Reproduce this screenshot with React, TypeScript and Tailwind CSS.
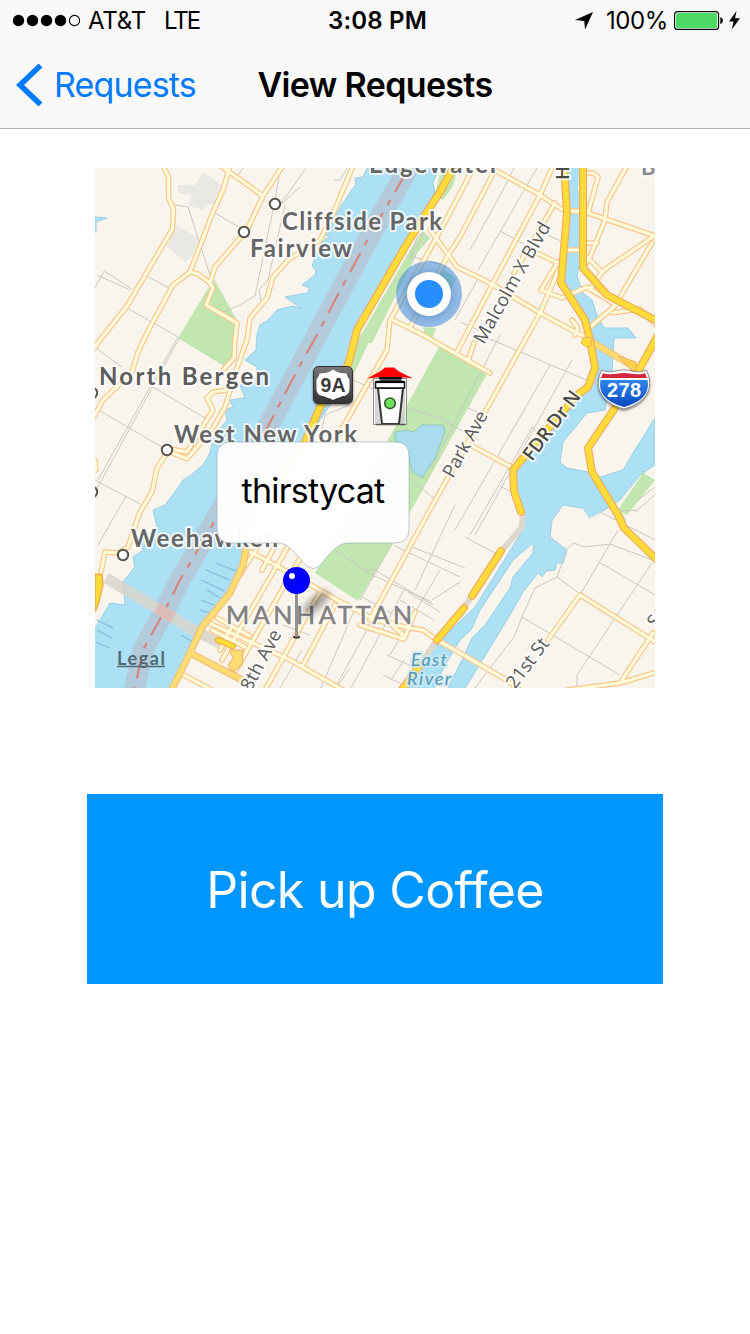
import React from "react";

const land = "#f9f5ed";
const water = "#ace0f4";
const park = "#c1e6b0";

const minorRoads: string[] = [
  "M163 166L168.5 177V198L173.5 209L172.5 229L166 240L127 306L100 340L93 350",
  "M230 166L223 190L213 212L190 272L173 285L147 333L138 352L132 372L103 400L93 418",
  "M221 166L263 196",
  "M284 164L263 196L247 230L215 267L210 283L213 288L206 305L237 323L235 340L234 358L224 369",
  "M190 272L198 274L210 283",
  "M353 166L333 214L320 240L288 260L273 277L267 298L250 318L247 340L237 368L225 407L213 428L187 459L170 452",
  "M227 390L213 392L207 398L213 410L187 452L170 449",
  "M167 453L157 468L152 492L140 512L128 547L118 553L105 552L101 572",
  "M95 460L96 470",
  "M475 165L437 237L390 320L387 350L340 432L300 500L262 570",
  "M495 170L460 237L447 257L410 327",
  "M430 230L457 267L480 278L497 287L540 313L577 333L588 338",
  "M495 170L540 195L563 210L588 213L655 236",
  "M553 166L540 195L492 285L457 352",
  "M555 203L514 273",
  "M537 253L560 264",
  "M558 262L541 290L562 298L587 287L616 305L590 327",
  "M561 264L540 313L485 412L427 515L370 620",
  "M393 320L423 335L490 373",
  "M474 343L468 361",
  "M467 443L513 468",
  "M567 211H583",
  "M566 250H582",
  "M657 234L607 268L602 272L587 257",
  "M652 243L620 297",
  "M627 166L607 202L605 220L590 257L583 268",
  "M583 173H593L598 177L588 213",
  "M588 243H597M602 272L590 290M572 320L578 328L575 335",
  "M612 313L640 309L655 324",
  "M337 600L375 620L410 628L423 630L437 640L460 653L503 678L520 690",
  "M375 609L405 637L415 612M360 625L404 639",
  "M548 640L580 595L657 643",
  "M653 633L620 683M567 690L620 683L657 672",
  "M247 550L290 573L337 600",
  "M207 622L290 660L345 691",
  "M180 673L210 689",
  "M290 543L222 660",
  "M302 555L236 670",
  "M320 592L265 690",
  "M335 605L302 667",
  "M217 618L250 636M212 630L245 647M232 626L220 650",
  "M262 540L240 575",
];

const lanes: string[] = [
  "M243 168L236 178M175 205L188 207L210 275M215 213L247 232M280 170L275 200L255 296L240 305L223 312",
  "M300 187L275 210M285 205L268 280L259 290L261 300",
  "M147 276L169 288M127 308L178 337L98 480M97 275L130 290M95 288L104 271L132 289",
  "M97 349L122 367M153 387L205 418M95 408L167 450M95 480L140 504M126 496L98 545M180 337L95 492",
  "M334 180H340L352 160M280 205L306 168M409 260L418 235L424 233L411 258",
  "M514 168L503 190L470 250M537 168L478 270M500 231L562 265M543 233L561 241",
  "M480 275L455 320M460 322L485 333M410 256L440 264M478 334L605 388M500 335L430 470M550 365L455 530M533 426L470 535M532 428L545 438",
  "M322 428L325 415L350 405M353 380L375 390M407 408L440 418L478 440M413 482L436 500M468 408L482 414",
  "M572 360L500 490L475 535M500 486L511 492M465 537L495 553M455 505L415 590",
  "M407 545L465 568M395 546L460 577M335 550L370 574L432 602M392 544L360 600M362 570H375L433 605",
  "M362 597L440 640M356 606L320 690M375 615L334 690M405 588L350 690M387 655L420 670M383 675L410 688",
  "M400 600L434 620M408 592L440 612M404 660L391 680M440 570L390 655M432 600L460 582",
  "M566 550L574 543L584 547L610 544L655 561M557 577L567 550M557 577L580 594M557 577L535 588L522 617L514 637L475 688M522 617L620 675",
  "M610 544L577 600M599 562L655 595M652 563L577 675V688M600 512L655 540M612 512L637 510M610 544L618 530",
  "M638 500L655 487M635 512L655 495M302 650L280 688M283 625L310 635M335 690L350 668",
];

const highways: string[] = [
  "M455 165L440 192L425 215L405 247L357 330L348 365L320 407L305 442L262 500",
  "M564 166L567 213L561 283L585 320L590 340L595 368L588 387L577 395L513 470L514 491L521 512",
  "M583 166V268L607 295L657 321",
  "M657 337L640 368L617 405L588 448L592 472L618 515L624 528L657 560",
  "M501 551L472 596",
  "M464 608L437 640",
  "M420 665L401 691",
];

const amber: string[] = [
  "M246 548L243 565L230 593L202 627L190 653L171 691",
  "M190 653L217 667L244 681",
];

const townDots: [number, number][] = [
  [275, 204],
  [244, 232],
  [167, 450],
  [123, 555],
  [92, 393],
  [92, 492],
];

function Lines({ items, color, width, cap = "round" }: { items: string[]; color: string; width: number; cap?: "round" | "butt" }) {
  return (
    <g fill="none" stroke={color} strokeWidth={width} strokeLinejoin="round" strokeLinecap={cap}>
      {items.map((d) => (
        <path key={d} d={d} />
      ))}
    </g>
  );
}

function Label({
  x,
  y,
  w,
  size,
  children,
  color = "#666666",
  angle = 0,
  weight = 700,
  family = "Lato, sans-serif",
  italic = false,
  halo = "#ffffff",
}: {
  x: number;
  y: number;
  w: number;
  size: number;
  children: string;
  color?: string;
  angle?: number;
  weight?: number;
  family?: string;
  italic?: boolean;
  halo?: string;
}) {
  return (
    <text
      x={x}
      y={y}
      textLength={w}
      fontSize={size}
      fontWeight={weight}
      fontFamily={family}
      fontStyle={italic ? "italic" : "normal"}
      fill={color}
      stroke={halo}
      strokeOpacity={0.8}
      strokeWidth={4}
      strokeLinejoin="round"
      paintOrder="stroke"
      transform={`rotate(${angle} ${x} ${y})`}
    >
      {children}
    </text>
  );
}

function CityMap() {
  const road = "'Open Sans', 'Noto Sans', sans-serif";
  return (
    <svg className="block h-full w-full [font-variant-ligatures:none]" viewBox="95 168 560 520">
      <defs>
        <linearGradient id="plate" x1="0" y1="0" x2="0" y2="1">
          <stop offset="0" stopColor="#777" />
          <stop offset="1" stopColor="#333" />
        </linearGradient>
        <linearGradient id="interstate" x1="0" y1="0" x2="0" y2="1">
          <stop offset="0" stopColor="#2f86f2" />
          <stop offset="1" stopColor="#0a47bd" />
        </linearGradient>
        <filter id="soft" x="-50%" y="-50%" width="200%" height="200%">
          <feGaussianBlur stdDeviation="3.5" />
        </filter>
        <filter id="drop" x="-30%" y="-30%" width="160%" height="160%">
          <feDropShadow dx="0" dy="1.5" stdDeviation="1.2" floodOpacity="0.5" />
        </filter>
      </defs>
      <rect x="95" y="168" width="560" height="520" fill={land} />

      <path d="M203 172L222 185L215 203L206 205L203 210L188 205L192 195L178 193V185H195ZM177 225L198 238L193 255L185 262L167 247Z" fill="#e9e8e5" />

      <g fill={water} stroke="#9bcfe6" strokeWidth="1">
        <path d="M368 166L363 177L355 178L356 184L345 200L323 235L331 236L321 242L312 266L316 270L315 275L302 285L310 288L307 293L285 297L301 308L292 306L277 310L268 320L260 325L257 335L256 350L245 360L257 367L255 382L240 385L245 398L230 400L233 407L225 410L227 420L213 438L210 453L203 465L190 476L183 480L180 485L165 505L153 510L157 527L142 540L143 550L133 557L135 567L123 582L125 605L110 603L97 625L93 630V692H172L190 653L202 627L230 593L243 560L262 500L305 442L330 405L357 330L405 247L418 225L435 192L433 183L440 166Z" />
        <path d="M568 166H581V258L577 276L583 293L592 300L597 315L604 328H628L636 338L614 338L612 370L605 410L587 413L563 442L560 462L567 468L593 473L597 478L623 470L630 458L655 418V465L640 475L620 500L603 511L590 518L583 508L563 505L552 520L550 537L567 550L563 563H557L555 570L546 571L542 577L538 573L523 592L507 620L464 690H405L423 663L440 640L475 607L523 530L521 510L513 472L577 395L588 387L595 368L588 335L585 320L572 300L564 283L568 213Z" />
        <path d="M95 217L107 218L96 222V232H94Z" />
      </g>
      <path
        d="M533 543L513 560L500 580L480 610L471 630L460 640L445 665L433 690H447L462 660L472 638L485 625L510 588L513 577L533 553Z"
        fill={land}
        stroke="#9bcfe6"
      />
      <path d="M579 178L584 180L582 190H578ZM563 508L583 510L590 520L600 512L570 530L555 525Z" fill={land} />
      <path d="M583 508L590 518L603 511Z" fill={water} />
      <path
        d="M97 620L113 628M97 630L112 638M96 642L110 648M206 570L230 580M201 580L224 591M207 590L220 598M201 600L216 606M200 610L213 614M216 563L236 571M181 635L193 642"
        stroke="#83bdda"
        strokeWidth="1.2"
      />

      <g fill={park}>
        <path d="M210 285L214 279L238 322L234 358L224 366L178 338Z" />
        <path d="M440 345L487 374L393 543L358 601L315 573Z" />
        <path d="M441 168L458 168L453 186L443 200L435 196ZM423 230L430 238L418 252L392 303L372 343L357 342L410 250Z" />
        <path d="M443 269L456 278L450 292L436 292ZM423 327L436 328L432 340L425 337ZM643 473L655 480L627 515L618 510ZM357 335L372 335L355 372H350Z" />
        <path d="M620 510L627 521L622 520Z" />
      </g>
      <path d="M395 432L407 430L413 432L422 425H443L445 432L435 458L422 478L412 472L408 452L395 440Z" fill="#a9dcef" stroke="#93cbb8" />

      <path d="M413 160L373 230L317 335L265 432L217 517L180 580L165 610L143 650L134 692" fill="none" stroke="#b3cadb" strokeWidth="21" />
      <path
        d="M406 173L373 230L335 300L317 335L300 365L265 432L217 517L180 580L165 610L143 650L134 692"
        fill="none"
        stroke="#d98678"
        strokeWidth="2.2"
        strokeDasharray="22 9 6 9"
      />

      <Lines items={lanes} color="#cbc8c1" width={1} cap="butt" />

      <path d="M106 578L197 632L226 646" stroke="#d9d5ca" strokeOpacity="0.85" strokeWidth="11" fill="none" />
      <path d="M157 608L173 618" stroke="#dcbcb8" strokeWidth="11" fill="none" />
      <path d="M523 510L522 527L500 553M472 596L462 610M437 640L420 665" stroke="#dcd8cc" strokeWidth="6" fill="none" />

      <Lines items={minorRoads} color="#f8c78e" width={5.6} />
      <Lines items={minorRoads} color="#fffbd9" width={3.2} />

      <Lines items={["M590 341L638 369", ...amber]} color="#f2bd7c" width={7.2} />
      <Lines items={["M590 341L638 369", ...amber]} color="#fddc72" width={5.2} />
      <Lines items={highways} color="#f2ac62" width={8} />
      <Lines items={highways} color="#ffdc38" width={5.6} />
      <path d="M95 574L102 575L103 585L98 605L95 612Z" fill="#ffdc38" stroke="#f2ac4a" strokeWidth="1.5" />
      <path d="M218 640L233 646" stroke="#f2ac4a" strokeWidth="6.5" strokeLinecap="round" />
      <path d="M218 640L233 646" stroke="#ffdc38" strokeWidth="4.2" strokeLinecap="round" />
      <path d="M229 650H243L242 665L232 672L228 665L233 658Z" fill="#fddc72" stroke="#eeb069" />
      <path d="M583 338L592 337L591 346L586 347L581 343Z" fill="#ffdc38" stroke="#eeb069" />
      <path d="M618 356L636 362L637 369L632 371Z" fill="#fdd24a" stroke="#eeb069" />

      <g fill="#fff" stroke="#55554f" strokeWidth="2">
        {townDots.map(([cx, cy]) => (
          <circle key={`${cx}-${cy}`} cx={cx} cy={cy} r="5.2" />
        ))}
      </g>

      <Label x={369} y={173} w={130} size={24}>Edgewater</Label>
      <Label x={282} y={230} w={160} size={24}>Cliffside Park</Label>
      <Label x={250} y={257} w={102} size={24}>Fairview</Label>
      <Label x={99} y={385} w={170} size={24} color="#5c5c5c">North Bergen</Label>
      <Label x={174} y={443} w={183} size={24}>West New York</Label>
      <Label x={131} y={547} w={147} size={24}>Weehawken</Label>
      <g stroke="#85827f">
        <Label x={226} y={624} w={186} size={25} weight={400} color="#85827f">MANHATTAN</Label>
        <text x="226" y="624" textLength="186" fontSize="25" fontFamily="Lato, sans-serif" fill="none" strokeWidth="0.6" aria-hidden="true">
          MANHATTAN
        </text>
      </g>
      <Label x={641} y={175} w={16} size={22} color="#8a8a8a">B</Label>

      <Label x={484} y={345} w={136} size={18.5} weight={500} family={road} angle={-60.5} color="#5a5a5a">Malcolm X Blvd</Label>
      <Label x={453} y={479} w={73} size={18.5} weight={500} family={road} angle={-61} color="#5a5a5a">Park Ave</Label>
      <Label x={532} y={462} w={82} size={19} weight={600} family={road} angle={-53} color="#4a4a4a">FDR Dr N</Label>
      <Label x={251} y={692} w={66} size={18.5} weight={500} family={road} angle={-62} color="#5a5a5a">8th Ave</Label>
      <Label x={515} y={690} w={58} size={18.5} weight={500} family={road} angle={-53} color="#5a5a5a">21st St</Label>
      <Label x={656} y={629} w={18} size={18.5} weight={500} family={road} angle={-53} color="#5a5a5a">St</Label>
      <Label x={569} y={180} w={14} size={18.5} weight={600} family={road} angle={-90} color="#4a4a4a">H</Label>

      <Label x={411} y={666} w={36} size={18} weight={500} italic color="#5c9cb9" halo="#cdebf5">East</Label>
      <Label x={407} y={685} w={44} size={18} weight={500} italic color="#5c9cb9" halo="#cdebf5">River</Label>

      <text x="117" y="665" textLength="48" fontSize="18" fontWeight="700" fontFamily="Lato, sans-serif" fill="#506a76">
        Legal
      </text>
      <path d="M117 666.5H165" stroke="#506a76" strokeWidth="1.5" />

      <g filter="url(#drop)">
        <rect x="313.5" y="366.5" width="39" height="37" rx="5" fill="url(#plate)" stroke="#333" />
        <path
          d="M333 369.5C337 372.5 342 373.5 346.5 373.5C347 376 348.5 378 349.5 379.5V389C349.5 392 348 394.5 345.5 395.5C341 396.5 337 398 333 400C329 398 325 396.5 320.500 395.5C318 394.5 316.5 392 316.5 389V379.500C317.500 378 319 376 319.500 373.5C324 373.500 329 372.5 333 369.500Z"
          fill="#fff"
        />
      </g>
      <text x="333" y="392" textAnchor="middle" fontSize="19.5" fontWeight="700" fontFamily="'Liberation Sans', sans-serif" fill="#3a3a3a" textLength="25">
        9A
      </text>

      <g filter="url(#drop)">
        <path d="M602 370C609 374 617 370 624 370C631 370 639 374 646 370C654 384 650 402 624 409C598 402 594 384 602 370Z" fill="#fff" stroke="#777" strokeWidth="0.8" />
      </g>
      <path d="M603 373C610 376 617 373 624 373C631 373 638 376 645 373L647 378H601Z" fill="#d3273f" />
      <path d="M600.5 380H647.5C650 393 642 402 624 407C606 402 598 393 600.5 380Z" fill="url(#interstate)" />
      <text x="624" y="397" textAnchor="middle" fontSize="20" fontWeight="700" fontFamily="'Liberation Sans', sans-serif" fill="#fff" textLength="34">
        278
      </text>

      <circle cx="429" cy="294" r="33" fill="#2a7fe0" fillOpacity="0.5" />
      <circle cx="429" cy="295" r="23" fill="#1d4f8c" fillOpacity="0.3" filter="url(#soft)" />
      <circle cx="429" cy="294" r="22" fill="#fff" />
      <circle cx="429" cy="294" r="14" fill="#268eff" />

      <rect x="373.5" y="378.5" width="33" height="46" fill="#fff" fillOpacity="0.6" stroke="#909090" />
      <path d="M375 380H383L380 424H375ZM398 380H405V424H400Z" fill="#aaa" fillOpacity="0.45" />
      <path d="M367 378.5L380 371.5L385 367.5H394L399 371.5L413 378.5L405 377.500H376Z" fill="#f00" />
      <rect x="379.500" y="377" width="22" height="5" fill="#4a4a4a" />
      <path d="M379 378H402" stroke="#000" strokeWidth="1.500" />
      <path d="M378 388L382 424H399L403 388Z" fill="#fff" stroke="#333" strokeWidth="2" />
      <rect x="375.5" y="382" width="29" height="6" fill="#fff" stroke="#1a1a1a" strokeWidth="1.6" />
      <path d="M376 382H404" stroke="#000" strokeWidth="2.2" />
      <path d="M376 424.5H405" stroke="#555" strokeWidth="1.5" />
      <circle cx="390" cy="403.300" r="5.300" fill="#6de35b" stroke="#335c2d" strokeWidth="1.6" />

      <ellipse cx="316" cy="603" rx="17" ry="6" transform="rotate(-43 316 603)" fill="#000" fillOpacity="0.36" filter="url(#soft)" />
      <ellipse cx="296.5" cy="637" rx="3.5" ry="1.6" fill="#333" />
      <path d="M296.5 590V637" stroke="#929292" strokeWidth="3" />
      <circle cx="296.5" cy="580.5" r="13.5" fill="#0000fe" />
      <circle cx="292" cy="576" r="3" fill="#fff" />
    </svg>
  );
}

function Callout() {
  return (
    <div className="absolute left-[121px] top-[273px] h-[130px] w-[194px]">
      <svg className="absolute inset-0" width="194" height="130" viewBox="216 441 194 130">
        <path
          d="M231 442H395Q409 442 409 456V529Q409 543 395 543H348C335 543 326 560 318 567Q313 570 308 567C299 560 291 543 278 543H231Q217 543 217 529V456Q217 442 231 442Z"
          fill="#fff"
          fillOpacity="0.97"
          stroke="#8a9ba3"
          strokeOpacity="0.5"
        />
      </svg>
      <div className="relative flex h-[98px] items-center justify-center text-[34px] tracking-[-0.75px] text-black">thirstycat</div>
    </div>
  );
}

function StatusBar() {
  return (
    <div className="grid h-[42px] grid-cols-[1fr_auto_1fr] items-center text-[24px] leading-none text-black">
      <div className="flex items-center pl-3">
        <svg width="70" height="14" viewBox="0 0 70 14">
          {[6.5, 20.5, 34.5, 48.5].map((cx) => (
            <circle key={cx} cx={cx} cy="6.5" r="5.7" />
          ))}
          <circle cx="62.5" cy="6.5" r="5.1" fill="none" stroke="#000" strokeWidth="1.1" />
        </svg>
        <span className="ml-[6px] tracking-[-0.2px]">AT&amp;T</span>
        <span className="ml-[18px] tracking-[-2px]">LTE</span>
      </div>
      <div className="pl-[5px] font-semibold tracking-[0.2px]">3:08 PM</div>
      <div className="flex items-center justify-end pr-[9px]">
        <svg width="20" height="20" viewBox="0 0 20 20">
          <path d="M19 1L11 18.5L10.3 10L1 9Z" />
        </svg>
        <span className="ml-3 tracking-[-0.4px]">100%</span>
        <svg className="ml-[6px]" width="50" height="20" viewBox="0 0 50 20">
          <rect x="0.6" y="0.6" width="44" height="17.8" rx="3" fill="#fff" stroke="#000" strokeWidth="1.1" />
          <rect x="2" y="2" width="41.2" height="15" rx="1.8" fill="#4cd964" />
          <path d="M46.3 6Q49 7 49 9.500T46.3 13Z" />
        </svg>
        <svg className="ml-[4px]" width="13" height="20" viewBox="0 0 13 20">
          <path d="M8.5 0L1 10.500H5.6L3.8 18.500L12 7.300H7Z" />
        </svg>
      </div>
    </div>
  );
}

export default function App() {
  return (
    <div className="flex h-[1334px] w-[750px] flex-col bg-white font-['Inter',sans-serif]">
      <header className="h-[129px] border-b border-[#b2b2b2] bg-[#f9f9f9]">
        <StatusBar />
        <nav className="grid h-[85px] grid-cols-[1fr_auto_1fr] items-center text-[34px] leading-none">
          <button className="flex items-center pl-4 text-[#007aff]">
            <svg width="27" height="42" viewBox="0 0 27 42">
              <path d="M24.500 1.500L4 21L24.500 40.500" fill="none" stroke="currentColor" strokeWidth="5.500" />
            </svg>
            <span className="ml-[11px] tracking-[-0.85px]">Requests</span>
          </button>
          <h1 className="font-semibold tracking-[-0.65px] text-black">View Requests</h1>
          <span />
        </nav>
      </header>
      <main className="flex flex-col items-center">
        <section className="relative mt-[39px] h-[520px] w-[560px] overflow-hidden">
          <CityMap />
          <Callout />
        </section>
        <button className="mt-[106px] h-[190px] w-[576px] bg-[#0096ff] pt-[2px] text-[50px] leading-none tracking-[-0.65px] text-white [font-variant-ligatures:none]">
          Pick up Coffee
        </button>
      </main>
    </div>
  );
}
